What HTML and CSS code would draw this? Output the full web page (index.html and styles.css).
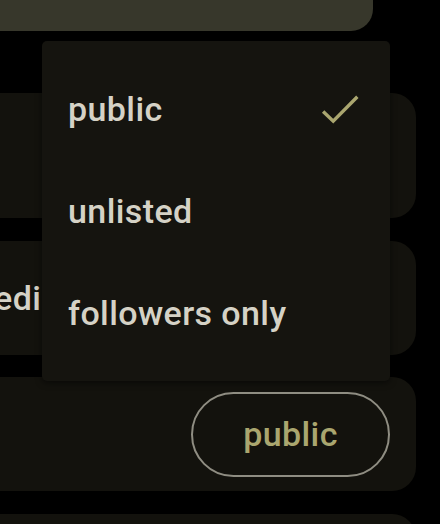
FILE: index.html
```html
<!DOCTYPE html>
<html>
<head>
<meta charset="utf-8">
<link rel="stylesheet" href="styles.css">
</head>
<body>
<div class="screen">
  <div class="topbar"></div>
  <div class="cards">
    <div class="card card-tall"></div>
    <div class="card"><span class="card-label">media</span></div>
    <div class="card card-end"><button class="pill">public</button></div>
    <div class="card"></div>
  </div>
  <div class="menu">
    <div class="menu-item">
      <span>public</span>
      <svg class="check" width="51" height="51" viewBox="0 0 24 24"><polyline points="4.3,12.9 9.05,17.5 20.4,6" fill="none" stroke="#aaa66f" stroke-width="1.6"/></svg>
    </div>
    <div class="menu-item"><span>unlisted</span></div>
    <div class="menu-item"><span>followers only</span></div>
  </div>
</div>
</body>
</html>
```
FILE: styles.css
```css
html, body {
  margin: 0;
  padding: 0;
  background: #000;
}
body {
  width: 440px;
  height: 524px;
  overflow: hidden;
  font-family: Roboto, "Noto Sans", sans-serif;
}
.screen {
  position: relative;
  width: 440px;
  height: 524px;
  overflow: hidden;
}
.topbar {
  height: 31px;
  margin-left: -40px;
  margin-right: 67px;
  background: #37372b;
  border-bottom-right-radius: 22px;
}
.cards {
  margin-top: 62px;
  margin-left: -40px;
  margin-right: 24px;
  display: flex;
  flex-direction: column;
  gap: 22.5px;
}
.card {
  height: 114px;
  flex: none;
  background: #13120d;
  border-radius: 24px;
  display: flex;
  align-items: center;
  padding: 0 26px 0 4px;
}
.card-tall {
  height: 125px;
}
.card-end {
  justify-content: flex-end;
}
.card-label {
  font-size: 34px;
  font-weight: 500;
  color: #d5d2c6;
  letter-spacing: 0.4px;
}
.pill {
  width: 199px;
  height: 85px;
  border: 2px solid #8f8d82;
  border-radius: 43px;
  background: transparent;
  color: #aaa66f;
  font-family: Roboto, "Noto Sans", sans-serif;
  font-size: 34px;
  font-weight: 500;
  letter-spacing: 0.4px;
  padding: 0;
}
.menu {
  position: absolute;
  left: 42px;
  top: 41px;
  width: 348px;
  padding: 17px 0;
  background: #15140f;
  border-radius: 5px;
  box-shadow: 0 2px 6px rgba(0, 0, 0, 0.5);
}
.menu-item {
  height: 102px;
  display: flex;
  align-items: center;
  justify-content: space-between;
  padding: 0 25px 0 26px;
  font-size: 34px;
  font-weight: 500;
  letter-spacing: 0.4px;
  color: #d5d2c6;
}
.check {
  display: block;
}
```
